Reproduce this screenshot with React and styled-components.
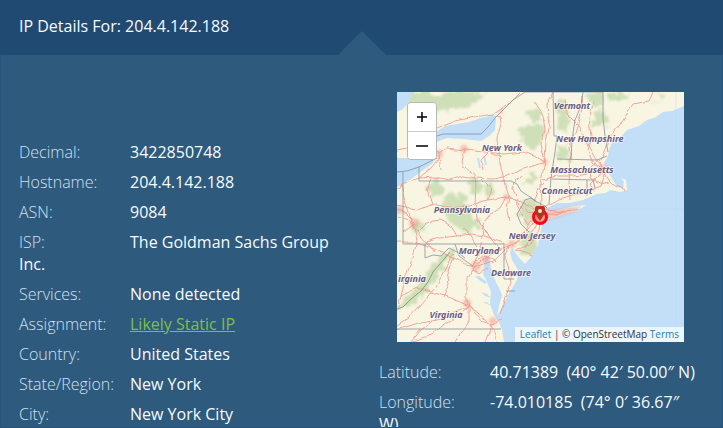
import React, { useState } from "react";
import styled, { createGlobalStyle } from "styled-components";

const colors = {
  header: "#204a72",
  panel: "#2e5a7e",
  edge: "#26547b",
  label: "#d0e1f0",
  text: "#f6fafd",
  green: "#7bc143",
  link: "#2b7ca8",
};

const details = [
  { label: "Decimal:", value: "3422850748" },
  { label: "Hostname:", value: "204.4.142.188" },
  { label: "ASN:", value: "9084" },
  { label: "ISP:", value: "The Goldman Sachs Group Inc." },
  { label: "Services:", value: "None detected" },
  { label: "Assignment:", value: "Likely Static IP", href: "#static-ip" },
  { label: "Country:", value: "United States" },
  { label: "State/Region:", value: "New York" },
  { label: "City:", value: "New York City" },
];

const position = [
  { label: "Latitude:", value: "40.71389\u00a0 (40° 42′ 50.00″ N)" },
  { label: "Longitude:", value: "-74.010185\u00a0 (74° 0′ 36.67″ W)" },
];

const forests = [
  "M6 0H88L80 10L60 16L44 20L30 18L14 22L8 12Z",
  "M122 40L130 34L142 30L148 38L144 50L134 56L124 50Z",
  "M130 22L142 18L146 26L136 30Z",
  "M161 12L168 8L172 30L168 38L162 32Z",
  "M196 22L206 18L212 26L206 34L196 34Z",
  "M188 2H206V12L196 16Z",
  "M210 0H236L228 8L214 8Z",
  "M30 96L40 88L46 94L44 104L34 104Z",
  "M46 108L56 102L70 104L74 124L84 130L76 140L58 136L50 124Z",
  "M70 90L78 86L86 94L82 104L72 102Z",
  "M86 96L96 90L100 98L92 106Z",
  "M124 108L134 106L144 114L136 124L130 134L122 122Z",
  "M128 138L138 140L140 154L132 164L122 156Z",
  "M161 54L172 52L172 68L162 68Z",
  "M128 84L138 82L136 92L126 94Z",
  "M53 156L58 158L44 178L32 198L18 210L2 217L0 212L14 202L26 186L40 170Z",
  "M260 2L266 4L264 10L259 8Z",
  "M14 130L24 126L26 140L16 142Z",
];

const waters = [
  // atlantic, with the delaware and chesapeake bays
  "M287 14L275 19L266 20L259 25L250 28L242 34L230 38L224 45L215 50L212 58L211 64L207 71L209 78L213 83L216 88L220 95L226 96L227 90L224 86L229 88L230 98L223 100L214 98L208 101L200 102L186 108L172 111L160 111L150 116L146 120L150 121L164 117L178 114L189 113L182 118L165 123L150 128L146 129L144 138L141 153L134 165L128 172L123 167L115 156L113 160L115 168L121 178L120 188L114 198L110 205L105 215L100 224L102 214L105 203L102 196L97 186L94 176L92 164L89 164L87 173L86 182L90 190L94 200L93 212L97 223L102 230L105 238L107 250H287Z",
  // lake ontario
  "M39 40L48 34L60 32L72 30L84 26L97 23L99 27L98 38L92 44L84 49L76 48L66 47L50 46L39 50Z",
  // lake erie
  "M0 66L12 66L38 64L36 71L26 78L14 87L0 95Z",
  // georgian bay
  "M0 0H16L12 9L6 17L0 20Z",
  "M80 66L82 66L84 76L82 76ZM86 64L88 64L90 73L88 73Z",
  "M88 192L82 188L78 184L82 184L90 190ZM94 206L88 204L84 200L90 202ZM94 214L86 210L90 210Z",
];

const borders = [
  "M0 80L10 79L22 75L40 66M40 44L46 42H84L91 35L98 26L106 18L116 8L128 0",
  "M6 80V152H107V187M22 74V89H114L120 92L124 99L133 105L140 110L134 106L128 108L126 112L120 122L124 132L132 140",
  "M28 152V166L36 163L44 164L52 156L60 160L68 166",
  "M133 105L140 110L148 114L150 116M156 0L157 44H160L158 60L154 86L152 112M128 0H206M206 0V26L208 44L211 60",
  "M160 67L200 68L210 64M155 87L196 88L198 96M190 88V104M186 0L184 14L178 28L175 48L174 67",
  "M0 237H104M107 187H117M109 199H118",
  "M58 152L62 164L70 170L76 174",
];

const ridge = "M53 160L48 166L42 173L36 180L31 190L24 199L14 207L6 215L0 217";

const roads = [
  "M40 36L58 29L78 25L96 22L104 18L116 8L124 0",
  "M0 58L10 56L20 52L32 56L42 62L50 56L68 58L88 60L106 62L126 60L138 64L148 70",
  "M42 62L44 78M68 56L65 70L66 75L78 82L79 96L78 112",
  "M98 24L103 26L104 32L100 46L101 60L106 84L109 96L112 104L110 118L112 130",
  "M22 86L38 85L52 88L66 84L80 86L96 87L110 84L124 78L148 70",
  "M0 96L12 90L22 86L34 76L42 66",
  "M0 114L20 118L36 112L52 116L72 114L90 108L110 105L130 112L144 122",
  "M0 124L12 128L20 140L28 150L42 146L60 144L74 142L88 144L104 150L112 154L122 146L130 138L142 124",
  "M4 92L8 110L14 126L20 148L16 166L8 186L4 204L0 218",
  "M112 104L122 112L132 120L142 122M110 105L104 116L90 124L84 138",
  "M78 112L80 126L86 138L84 150L78 170M86 138L96 148L104 158",
  "M116 152L96 160L84 170L76 176L70 186L70 208L72 214",
  "M142 122L132 132L124 146L112 154L98 168L82 174",
  "M56 160L48 178L38 196L26 210L12 226L0 234",
  "M56 166L68 172L80 174M34 200L54 206L72 214L84 228L96 232L104 228",
  "M72 214L72 228L64 240L58 250M72 214L58 226L44 236L30 244L14 250",
  "M72 214L82 222L94 232L100 250M96 232L92 240L88 250",
  "M112 154L108 166L112 178L114 192L108 206L102 222",
  "M144 122L134 142L128 156M144 124L142 138L134 152L118 158L136 164",
  "M142 122L150 118L168 120L182 116M142 122L160 122L172 118",
  "M142 120L144 110L143 92L148 70L149 50L152 36L150 12L156 0",
  "M146 117L162 108L180 103L194 98L204 94L208 84",
  "M146 88L160 84L176 84L190 82L206 78M174 108L172 90L174 70L172 54L178 40L184 22L186 4",
  "M206 78L198 66L190 52L182 34L170 22L168 8",
  "M206 78L202 70L208 58L212 46L222 34L228 24L236 12L252 9L256 0",
  "M206 78L196 70L190 58L194 44L192 26L196 10",
  "M206 78L200 86L194 92L196 100M206 78L212 88L218 94L228 98M200 70L192 76L194 86L204 92L212 90",
  "M148 70L144 52L148 38L146 24L138 10",
  "M104 66L92 60L84 68L86 78",
  "M0 150L20 150L36 156L56 166M28 150L40 160M2 118L10 122L18 130M6 140L18 132",
  "M90 108L94 98L84 88M36 112L30 98L34 86",
  "M120 105L114 94L124 84M136 110L140 98L146 92",
  "M46 206L52 192L50 180L56 166M4 204L20 196L34 200",
  "M118 108L126 124L132 132M98 168L88 164L78 170L76 178L82 182L90 176",
  "M0 238L24 230L46 226L72 214M14 250L24 238L44 222",
  "M66 136L72 142L80 154M60 144L54 134L44 128L30 130L20 140",
];

const cities = [
  [17, 131, 5], [79, 174, 5], [88, 167, 4], [70, 211, 4], [96, 229, 4],
  [115, 152, 4], [142, 122, 6], [206, 78, 5], [67, 57, 4], [42, 62, 4],
  [109, 105, 3], [148, 70, 3], [2, 118, 4], [136, 128, 3], [104, 20, 2],
];

const places = [
  { name: "Vermont", x: 175, y: 17 },
  { name: "New York", x: 105, y: 59 },
  { name: "New Hampshire", x: 193, y: 50 },
  { name: "Massachusetts", x: 185, y: 81 },
  { name: "Connecticut", x: 170, y: 102 },
  { name: "Pennsylvania", x: 65, y: 121 },
  { name: "New Jersey", x: 135, y: 147 },
  { name: "Maryland", x: 82, y: 162 },
  { name: "Delaware", x: 114, y: 184 },
  { name: "Virginia", x: 49, y: 226 },
  { name: "irginia", x: 15, y: 190 },
];

const RegionMap = () => (
  <Tiles viewBox="0 0 287 250" role="img" aria-label="Map of New York City">
    <defs>
      <filter id="soft">
        <feGaussianBlur stdDeviation="1.5" />
      </filter>
      <filter id="patchy">
        <feTurbulence type="fractalNoise" baseFrequency="0.12" numOctaves="3" />
        <feDisplacementMap in="SourceGraphic" scale="16" xChannelSelector="R" yChannelSelector="G" />
        <feGaussianBlur stdDeviation="1" />
      </filter>
      <filter id="winding">
        <feTurbulence type="fractalNoise" baseFrequency="0.09" numOctaves="2" />
        <feDisplacementMap in="SourceGraphic" scale="5" xChannelSelector="R" yChannelSelector="G" />
      </filter>
    </defs>
    <rect width="287" height="250" fill="#f8f5e2" />
    <g fill="#cfe0b8" filter="url(#patchy)">
      {forests.map((d) => (
        <path key={d} d={d} />
      ))}
    </g>
    <g fill="#c2dff7">
      {waters.map((d) => (
        <path key={d} d={d} />
      ))}
    </g>
    <g fill="none" stroke="#f0988f" strokeLinejoin="round" opacity="0.85" filter="url(#winding)">
      {roads.map((d) => (
        <path key={d} d={d} />
      ))}
    </g>
    <g fill="#ed9184" opacity="0.5" filter="url(#soft)">
      {cities.map(([x, y, r]) => (
        <circle key={`${x}-${y}`} cx={x} cy={y} r={r} />
      ))}
      <path d="M142 121L164 117L184 114L176 120L150 128Z" />
    </g>
    <path d={ridge} fill="none" stroke="#829b7c" opacity="0.9" />
    <g fill="none" stroke="#858a99" opacity="0.75">
      {borders.map((d) => (
        <path key={d} d={d} />
      ))}
    </g>
    <path d="M143 117H287M279 0V250" stroke="#b6d4ec" opacity="0.4" />
    {places.map(({ name, x, y }) => (
      <PlaceName key={name} x={x} y={y}>
        {name}
      </PlaceName>
    ))}
    <circle cx="143" cy="125" r="6.5" fill="#f56f50" fillOpacity="0.55" stroke="#f5061d" strokeWidth="3" />
    <path d="M139 114H147L148 116V121L143 129L138 121V116Z" fill="#b8321c" />
    <circle cx="143" cy="119" r="2" fill="#fbe3d6" />
  </Tiles>
);

const Details = ({ rows }) => (
  <List>
    {rows.map(({ label, value, href }) => (
      <Row key={label}>
        <Label>{label}</Label>
        <Value>{href ? <GreenLink href={href}>{value}</GreenLink> : value}</Value>
      </Row>
    ))}
  </List>
);

function App() {
  const [zoom, setZoom] = useState(0);

  return (
    <Page>
      <GlobalStyle />
      <Header>
        <Title>IP Details For: 204.4.142.188</Title>
      </Header>
      <Panel>
        <Column $offset="82px">
          <Details rows={details} />
        </Column>
        <Column $offset="37px">
          <MapFrame>
            <Scaler style={{ transform: `scale(${2 ** zoom})` }}>
              <RegionMap />
            </Scaler>
            <ZoomControl>
              <ZoomButton aria-label="Zoom in" onClick={() => setZoom(zoom + 1)}>
                <svg width="12" height="12" viewBox="0 0 12 12">
                  <path d="M1 6H11M6 1V11" stroke="#000" strokeWidth="1.5" />
                </svg>
              </ZoomButton>
              <ZoomButton
                aria-label="Zoom out"
                onClick={() => setZoom(Math.max(0, zoom - 1))}
              >
                <svg width="12" height="12" viewBox="0 0 12 12">
                  <path d="M0 6H12" stroke="#000" strokeWidth="1.5" />
                </svg>
              </ZoomButton>
            </ZoomControl>
            <Attribution>
              <MapLink href="#leaflet">Leaflet</MapLink> | © OpenStreetMap{" "}
              <MapLink href="#terms">Terms</MapLink>
            </Attribution>
          </MapFrame>
          <Details rows={position} />
        </Column>
      </Panel>
    </Page>
  );
}

const GlobalStyle = createGlobalStyle`
  * {
    box-sizing: border-box;
  }

  body {
    margin: 0;
    background-color: ${colors.panel};
    font-family: "Open Sans", sans-serif;
    font-size: 16px;
    line-height: 22px;
    color: ${colors.text};
  }
`;

const Page = styled.main`
  height: 100vh;
  display: flex;
  flex-direction: column;
`;

const Header = styled.header`
  position: relative;
  background-color: ${colors.header};
  padding: 15px 19px 18px;

  &::after {
    content: "";
    position: absolute;
    left: 50%;
    bottom: 0;
    transform: translateX(-50%);
    border: 24px solid transparent;
    border-top: 0;
    border-bottom-color: ${colors.panel};
  }
`;

const Title = styled.h1`
  margin: 0;
  font-size: 16px;
  font-weight: 400;
`;

const Panel = styled.section`
  flex: 1;
  min-height: 0;
  overflow: hidden;
  display: grid;
  grid-template-columns: 1fr 1fr;
  align-items: start;
  gap: 37px;
  padding: 0 20px 0 18px;
  border: 1px solid ${colors.edge};
  border-top: 0;
  background-color: ${colors.panel};
`;

const Column = styled.div`
  padding-top: ${(props) => props.$offset};
`;

const List = styled.dl`
  margin: 0;
`;

const Row = styled.div`
  padding: 4px 0;
`;

const Label = styled.dt`
  display: inline-block;
  width: 111px;
  font-weight: 300;
  color: ${colors.label};
`;

const Value = styled.dd`
  display: inline;
  margin: 0;
`;

const GreenLink = styled.a`
  color: ${colors.green};
`;

const MapFrame = styled.div`
  position: relative;
  max-width: 287px;
  margin: 0 auto 15px;
  overflow: hidden;
`;

const Scaler = styled.div`
  transition: transform 250ms ease-out;
`;

const Tiles = styled.svg`
  display: block;
  width: 100%;
`;

const PlaceName = styled.text`
  font: italic 700 9px "Noto Sans", "Open Sans", sans-serif;
  text-anchor: middle;
  fill: #6b5d83;
  stroke: rgba(255, 255, 255, 0.5);
  stroke-width: 2px;
  paint-order: stroke;
`;

const ZoomControl = styled.div`
  position: absolute;
  top: 10px;
  left: 10px;
  display: flex;
  flex-direction: column;
  border: 1px solid #b5b9b9;
  border-radius: 4px;
  overflow: hidden;
`;

const ZoomButton = styled.button`
  display: flex;
  align-items: center;
  justify-content: center;
  width: 28px;
  height: 28px;
  padding: 0;
  border: 0;
  background-color: white;
  cursor: pointer;

  & + & {
    border-top: 1px solid #ccc;
  }
`;

const Attribution = styled.div`
  position: absolute;
  right: 0;
  bottom: 0;
  padding: 0 5px;
  background-color: rgba(255, 255, 255, 0.7);
  font-size: 10px;
  line-height: 15px;
  color: #333;
`;

const MapLink = styled.a`
  color: ${colors.link};
  text-decoration: none;
`;

export default App;
